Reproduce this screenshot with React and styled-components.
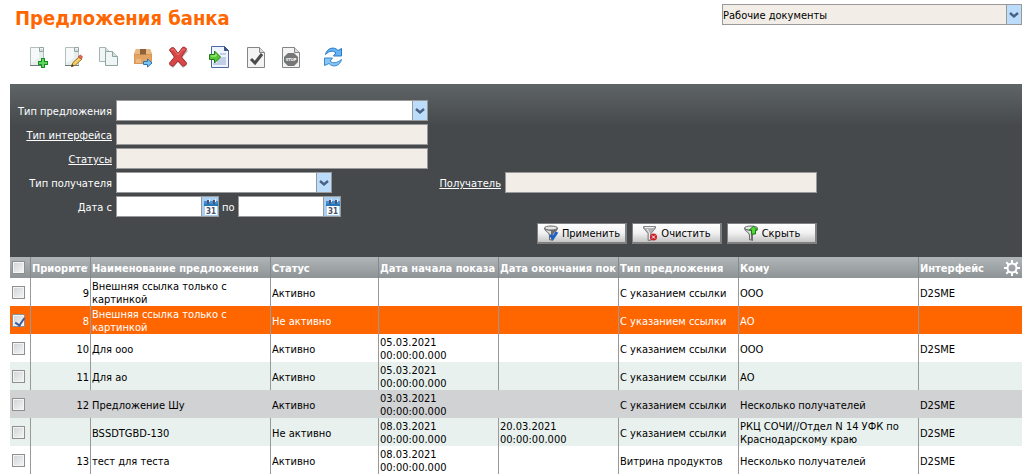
import React, { useState } from "react";
import styled, { createGlobalStyle, css } from "styled-components";

const COLUMNS = [
  { key: "priority", title: "Приоритет", width: 60, align: "right" },
  { key: "name", title: "Наименование предложения", width: 180 },
  { key: "status", title: "Статус", width: 108 },
  { key: "start", title: "Дата начала показа", width: 120 },
  { key: "end", title: "Дата окончания показа", width: 120 },
  { key: "type", title: "Тип предложения", width: 120 },
  { key: "to", title: "Кому", width: 180 },
  { key: "iface", title: "Интерфейс" },
];

const ROWS = [
  { priority: "9", name: "Внешняя ссылка только с картинкой", status: "Активно", type: "С указанием ссылки", to: "ООО", iface: "D2SME" },
  { priority: "8", name: "Внешняя ссылка только с картинкой", status: "Не активно", type: "С указанием ссылки", to: "АО" },
  { priority: "10", name: "Для ооо", status: "Активно", start: "05.03.2021 00:00:00.000", type: "С указанием ссылки", to: "ООО", iface: "D2SME" },
  { priority: "11", name: "Для ао", status: "Активно", start: "05.03.2021 00:00:00.000", type: "С указанием ссылки", to: "АО" },
  { priority: "12", name: "Предложение Шу", status: "Активно", start: "03.03.2021 00:00:00.000", type: "С указанием ссылки", to: "Несколько получателей", iface: "D2SME", hovered: true },
  { priority: "", name: "BSSDTGBD-130", status: "Не активно", start: "08.03.2021 00:00:00.000", end: "20.03.2021 00:00:00.000", type: "С указанием ссылки", to: "РКЦ СОЧИ//Отдел N 14 УФК по Краснодарскому краю", iface: "D2SME" },
  { priority: "13", name: "тест для теста", status: "Активно", start: "08.03.2021 00:00:00.000", type: "Витрина продуктов", to: "Несколько получателей", iface: "D2SME" },
];

const App = () => {
  const [selected, setSelected] = useState([1]);

  const toggle = (index) =>
    setSelected(selected.includes(index) ? selected.filter((i) => i !== index) : [...selected, index]);

  const toggleAll = () => setSelected(selected.length === ROWS.length ? [] : ROWS.map((_, i) => i));

  return (
    <Page>
      <GlobalStyle />
      <Header>
        <Title>Предложения банка</Title>
        <FolderSelect>
          <DropDown label="Папка" muted options={["Рабочие документы"]} />
        </FolderSelect>
      </Header>

      <Toolbar>
        <ToolGroup>
          <Tool aria-label="Создать"><NewIcon /></Tool>
          <Tool aria-label="Редактировать"><EditIcon /></Tool>
          <Tool aria-label="Копировать"><CopyIcon /></Tool>
          <Tool aria-label="Переместить"><MoveIcon /></Tool>
          <Tool aria-label="Удалить"><DeleteIcon /></Tool>
        </ToolGroup>
        <ToolGroup>
          <Tool aria-label="Импорт"><ImportIcon /></Tool>
          <Tool aria-label="Активировать"><ApproveIcon /></Tool>
          <Tool aria-label="Остановить"><StopIcon /></Tool>
        </ToolGroup>
        <ToolGroup>
          <Tool aria-label="Обновить"><RefreshIcon /></Tool>
        </ToolGroup>
      </Toolbar>

      <Filter onSubmit={(e) => e.preventDefault()}>
        <Fields>
          <Label htmlFor="offerType">Тип предложения</Label>
          <DropDown id="offerType" options={[""]} />
          <Spacer />

          <Label htmlFor="iface"><a href="#iface">Тип интерфейса</a></Label>
          <Input id="iface" readOnly />
          <Spacer />

          <Label htmlFor="statuses"><a href="#statuses">Статусы</a></Label>
          <Input id="statuses" readOnly />
          <Spacer />

          <Label htmlFor="recipientType">Тип получателя</Label>
          <Narrow>
            <DropDown id="recipientType" options={[""]} />
          </Narrow>
          <Label htmlFor="recipient"><a href="#recipient">Получатель</a></Label>
          <Input id="recipient" readOnly />

          <Label htmlFor="dateFrom">Дата с</Label>
          <Dates>
            <DateField id="dateFrom" />
            <Label htmlFor="dateTo">по</Label>
            <DateField id="dateTo" />
          </Dates>
        </Fields>
        <Actions>
          <Button type="submit"><ApplyIcon />Применить</Button>
          <Button type="reset"><ClearIcon />Очистить</Button>
          <Button type="button"><HideIcon />Скрыть</Button>
        </Actions>
      </Filter>

      <Table>
        <colgroup>
          <Col $width={21} />
          {COLUMNS.map((col) => (<Col key={col.key} $width={col.width} />))}
        </colgroup>
        <thead>
          <tr>
            <HeadCell $check>
              <Checkbox aria-label="Выбрать все" checked={selected.length === ROWS.length} onChange={toggleAll} />
            </HeadCell>
            {COLUMNS.map((col) => (
              <HeadCell key={col.key}>
                <HeadInner>
                  <HeadText>{col.title}</HeadText>
                  {col.key === "iface" && (
                    <Settings type="button" aria-label="Настройка колонок"><GearIcon /></Settings>
                  )}
                </HeadInner>
              </HeadCell>
            ))}
          </tr>
        </thead>
        <tbody>
          {ROWS.map((row, index) => (
            <Row key={index} $selected={selected.includes(index)} $hovered={row.hovered}>
              <Cell $check>
                <Checkbox
                  aria-label={`Выбрать ${row.name}`}
                  checked={selected.includes(index)}
                  onChange={() => toggle(index)}
                />
              </Cell>
              {COLUMNS.map((col) => (<Cell key={col.key} $align={col.align}>{row[col.key]}</Cell>))}
            </Row>
          ))}
        </tbody>
      </Table>
    </Page>
  );
};

export default App;

const DropDown = ({ id, label, muted, options }) => (
  <SelectBox>
    <Select id={id} aria-label={label} $muted={muted}>
      {options.map((option) => (<option key={option}>{option}</option>))}
    </Select>
    <Arrow>
      <svg width="10" height="8" viewBox="0 0 10 8">
        <path d="M1 2l4 3.5L9 2" fill="none" stroke="#4a6084" strokeWidth="2.4" />
      </svg>
    </Arrow>
  </SelectBox>
);

const DateField = ({ id }) => (
  <DateBox>
    <DateInput id={id} />
    <CalendarButton type="button" aria-label="Календарь">
      <svg width="16" height="19" viewBox="0 0 16 19">
        <path d="M2 4h14v5H2z" fill="#3c93cf" />
        <path d="M2 7h14v2H2z" fill="#2577b5" />
        <path d="M3 9h12v9H3z" fill="#fff" />
        <path d="M6 3v4M12 3v4" stroke="#5a4a7a" strokeWidth="2" />
        <path d="M7.500 2v3M13.500 2v3" stroke="#e2f2ff" />
        <text x="9" y="17" textAnchor="middle" fontSize="8" fontWeight="bold" fill="#4c5068">31</text>
      </svg>
    </CalendarButton>
  </DateBox>
);

/* toolbar icons, all on a 24px box */

const Sheet = ({ x = 2, y = 3, w = 15, h = 19, stroke = "#a5b3b3", fill = "#eff4f4" }) => (
  <>
    <path d={`M${x + 0.5} ${y - 0.5}h${w - 5}l5 5v${h - 5}h-${w}z`} fill={fill} stroke={stroke} />
    <path d={`M${x + w - 4.5} ${y - 0.5}v5h5`} fill="#d5dfdf" stroke={stroke} />
  </>
);

// sheet with a curled corner
const CurledSheet = () => (
  <>
    <path d="M3.500 2.500h12l1 1v17h-13z" fill="#e6eded" stroke="#b3bfbf" />
    <path d="M4 3h8v10l-8 5z" fill="#f6f9f9" />
    <path d="M12.500 2.500h4v4h-4z" fill="#f4f7f7" stroke="#93a3a3" />
    <path d="M13.500 4.500h2v1h-2z" fill="#9fb0b0" />
    <path d="M3 20.500h14" stroke="#6d7b7b" />
  </>
);

const NewIcon = () => (
  <svg width="24" height="24" viewBox="0 0 24 24">
    <CurledSheet />
    <path d="M14 13h4v3h3v4h-3v3h-4v-3h-3v-4h3z" fill="#178f22" />
    <path d="M15 14h2v3h3v2h-3v3h-2v-3h-3v-2h3z" fill="#5ed45a" />
  </svg>
);

const EditIcon = () => (
  <svg width="24" height="24" viewBox="0 0 24 24">
    <CurledSheet />
    <path d="M9.500 21.500l1.500-4 6.500-6 2.500 2.500-6.500 6z" fill="#f5cf60" stroke="#9a722d" />
    <path d="M16.500 11.500l2-1.500 2 2-2 2z" fill="#e36759" stroke="#c85247" />
    <path d="M9 22l1-3 2 2z" fill="#443b2d" />
  </svg>
);

const CopyIcon = () => (
  <svg width="24" height="24" viewBox="0 0 24 24">
    <Sheet x={2} y={3} w={11} h={14} />
    <Sheet x={8} y={7} w={12} h={14} stroke="#8fa3a3" />
  </svg>
);

const MoveIcon = () => (
  <svg width="24" height="24" viewBox="0 0 24 24">
    <path d="M4 4h14l2 5v10H2V9z" fill="#d99655" />
    <path d="M4 4h14l2 5H2z" fill="#e9b982" />
    <path d="M3 10h16v8H3z" fill="#e3a363" />
    <path d="M8 4h6v6l-2-1-1 1-1-1-2 1z" fill="#8e6238" />
    <path d="M4 15h5M4 17h5" stroke="#f2cfa4" />
    <path d="M11.500 16.500h4v-2.500l4.500 4-4.500 4v-2.500h-4z" fill="#7cc4f3" stroke="#2876b8" />
  </svg>
);

const DeleteIcon = () => (
  <svg width="24" height="24" viewBox="0 0 24 24">
    <path d="M4 6l4-2 4 5 5-6 4 3-6 7 5 7-4 3-5-6-5 6-4-3 5-7z" fill="#72706f" opacity=".5" />
    <path d="M2.500 5c1-2 3-3 4.500-2l4 5.500 4.500-6c1.500-1 3 0 4 1.500l-5 8 5 6c0 2-2 3-4 3l-4.500-5-4.500 5c-2 0-4-1-4-3l5-6z" fill="#d94646" stroke="#a52c31" />
    <path d="M4 5l2.500-1 4.500 6 5-6 2 1" fill="none" stroke="#ef7b74" />
  </svg>
);

const ImportIcon = () => (
  <svg width="24" height="24" viewBox="0 0 24 24">
    <path d="M2.500 1.500h13l4 4v17h-17z" fill="#eef3fc" stroke="#4e67a7" />
    <path d="M15.500 1.500v4h4z" fill="#3d5489" stroke="#3d5489" />
    <path d="M11 8h6v2h-6zM8 12h9v8H4v-2h4z" fill="#c0cee7" />
    <path d="M.5 9.500h5V6l6 6-6 6v-3.500h-5z" fill="#54c932" stroke="#247b19" />
    <path d="M2 11h5V9" fill="none" stroke="#b5f295" />
  </svg>
);

const ApproveIcon = () => (
  <svg width="24" height="24" viewBox="0 0 24 24">
    <Sheet x={3} y={3} w={17} h={20} stroke="#858585" fill="#f3f3f3" />
    <path d="M7 14l4 4 7-9" fill="none" stroke="#4b4b4b" strokeWidth="3" />
  </svg>
);

const StopIcon = () => (
  <svg width="24" height="24" viewBox="0 0 24 24">
    <Sheet x={3} y={3} w={17} h={20} stroke="#858585" fill="#f3f3f3" />
    <path d="M9 8h6l4 4v5l-4 4H9l-4-4v-5z" fill="#777" />
    <text x="12" y="16" textAnchor="middle" fontSize="4" fontWeight="bold" fill="#fff">STOP</text>
  </svg>
);

const RefreshIcon = () => (
  <svg width="24" height="24" viewBox="0 0 24 24">
    <path d="M4.500 9.500C6 3 13 1 17 5.500l3.500-2v7.500h-8l2.500-3C12 5 8 6 4.500 9.500z" fill="#66b4f3" stroke="#2b78c6" />
    <path d="M20.500 14.500C19 21 12 23 8 18.500l-4.500 2V13h8l-2.500 3c3 3 7 2 11.500-1.500z" fill="#85c6f7" stroke="#3986d0" />
  </svg>
);

const GearIcon = () => (
  <svg width="16" height="16" viewBox="0 0 16 16">
    <circle cx="8" cy="8" r="4.500" fill="none" stroke="#fff" strokeWidth="2" />
    <path
      d="M8 0v3M8 13v3M0 8h3M13 8h3M2.300 2.300l2.200 2.200M11.500 11.500l2.200 2.200M13.700 2.300l-2.200 2.200M4.500 11.500l-2.200 2.200"
      stroke="#fff"
      strokeWidth="2"
    />
  </svg>
);

const Funnel = () => (
  <>
    <path d="M1 3c0 3 4 4 5 7v5l4 1v-6c1-3 5-4 5-7z" fill="#6f6f6f" />
    <path d="M3 5c1 2 4 3 4 5v4l1 .5V6z" fill="#dcdcdc" />
    <ellipse cx="8" cy="3" rx="6.500" ry="2" fill="#e4e4e4" stroke="#6a6a6a" />
  </>
);

const ApplyIcon = () => (
  <svg width="16" height="16" viewBox="0 0 16 16">
    <Funnel />
    <path d="M7 10l3 3 4-6" fill="none" stroke="#1c62c4" strokeWidth="3" />
  </svg>
);

const ClearIcon = () => (
  <svg width="16" height="16" viewBox="0 0 16 16">
    <path d="M1.500 1.500h12V3L9 8.500v7H6v-7L1.500 3z" fill="#b3b3b6" stroke="#858589" />
    <path d="M3 2.500h9M5 4l2.500 4v6" stroke="#ececec" fill="none" />
    <circle cx="11.500" cy="12" r="3.500" fill="#c9202b" />
    <path d="M10 10.500l3 3M13 10.500l-3 3" stroke="#fff" />
  </svg>
);

const HideIcon = () => (
  <svg width="16" height="16" viewBox="0 0 16 16">
    <Funnel />
    <path d="M10.500 1l4 4h-2v4h-4V5h-2z" fill="#55d934" stroke="#137c13" />
  </svg>
);

const GlobalStyle = createGlobalStyle`
  body {
    margin: 0;
    background: #fff;
    color: #000;
  }
  body, input, select, button {
    font-family: "DejaVu Sans Condensed", "DejaVu Sans", sans-serif;
    font-size: 11px;
    line-height: 13px;
  }
  * {
    box-sizing: border-box;
  }
`;

const Page = styled.div`
  padding-left: 10px;
`;

const Header = styled.header`
  display: flex;
  justify-content: space-between;
  align-items: flex-start;
  padding: 4px 0 0 5px;
`;

const Title = styled.h1`
  margin: 0;
  font-size: 20px;
  line-height: 28px;
  font-weight: bold;
  color: #f60;
`;

const FolderSelect = styled.div`
  width: 300px;
`;

const Toolbar = styled.div`
  display: flex;
  gap: 18px;
  padding: 13px 17px 15px;
`;

const ToolGroup = styled.div`
  display: flex;
  gap: 11px;
`;

const Tool = styled.button`
  display: flex;
  padding: 0;
  border: 0;
  background: none;
  cursor: pointer;
`;

const Filter = styled.form`
  padding: 16px 0 13px;
  color: #fff;
  background: #45494c linear-gradient(#5f6467, #45494c) no-repeat top / 100% 42px;
`;

const Fields = styled.div`
  display: grid;
  grid-template-columns: 102px 312px 69px 312px;
  column-gap: 4px;
  row-gap: 3px;
  align-items: center;
`;

const Label = styled.label`
  padding-top: 2px;
  text-align: right;
  white-space: nowrap;

  a {
    color: #fff;
  }
`;

const Spacer = styled.div`
  grid-column: span 2;
`;

const field = css`
  width: 100%;
  height: 21px;
  margin: 0;
  padding: 0;
  border: 1px solid #999;
  border-radius: 0;
  outline: none;
  color: #000;
`;

const Input = styled.input`
  ${field}
  background: ${({ readOnly }) => (readOnly ? "#f2eee7" : "#fff")};
`;

const SelectBox = styled.div`
  position: relative;
`;

const Select = styled.select`
  ${field}
  display: block;
  padding-top: 1px;
  appearance: none;
  background: ${({ $muted }) => ($muted ? "#f2eee7" : "#fff")};
`;

const Arrow = styled.span`
  position: absolute;
  top: 1px;
  right: 1px;
  bottom: 1px;
  width: 15px;
  display: flex;
  align-items: center;
  justify-content: center;
  border-left: 1px solid #999;
  background: #bbdcfb;
  pointer-events: none;
`;

const Narrow = styled.div`
  width: 216px;
`;

const Dates = styled.div`
  display: flex;
  align-items: center;
  gap: 3px;
`;

const DateBox = styled.div`
  display: flex;
  width: 103px;
  height: 21px;
  border: 1px solid #999;
`;

const DateInput = styled.input`
  flex: 1;
  min-width: 0;
  padding: 0;
  border: 0;
  outline: none;
  background: #fff;
`;

const CalendarButton = styled.button`
  display: flex;
  padding: 0;
  border: 0;
  border-left: 1px solid #999;
  background: #a9cff3;
`;

const Actions = styled.div`
  display: flex;
  justify-content: flex-end;
  gap: 5px;
  width: 807px;
  max-width: 100%;
  margin-top: 6px;
`;

const Button = styled.button`
  display: flex;
  align-items: center;
  justify-content: center;
  gap: 3px;
  width: 90px;
  height: 21px;
  padding: 0;
  border: 1px solid #808080;
  border-width: 1px 2px 2px 1px;
  background: linear-gradient(#fff, #f1f1f1 50%, #c6c6c6);
  color: #000;
  cursor: pointer;
`;

const Table = styled.table`
  width: 100%;
  table-layout: fixed;
  border-collapse: separate;
  border-spacing: 0;
`;

const Col = styled.col`
  width: ${({ $width }) => ($width ? `${$width}px` : "auto")};
`;

const HeadCell = styled.th`
  height: 21px;
  padding: ${({ $check }) => ($check ? "0 2px" : "0 2px 0 1px")};
  border-right: 1px solid #85898c;
  background: linear-gradient(#b0b5b8, #8e9396);
  color: #fff;
  text-align: left;

  &:last-child {
    border-right: 0;
  }
`;

const HeadInner = styled.div`
  display: flex;
  align-items: center;
  justify-content: space-between;
`;

const HeadText = styled.span`
  padding-top: 2px;
  overflow: hidden;
  white-space: nowrap;
`;

const Settings = styled.button`
  display: flex;
  padding: 0;
  border: 0;
  background: none;
`;

const Cell = styled.td`
  height: 28px;
  padding: ${({ $check }) => ($check ? "0 2px" : "2px 1px 0 1px")};
  border-right: 1px solid #999;
  text-align: ${({ $align }) => $align || "left"};
  vertical-align: middle;

  &:last-child {
    border-right: 0;
  }
`;

const Row = styled.tr`
  &:nth-child(even) {
    background: #e8f1ee;
  }

  ${({ $hovered }) => $hovered && css`
    &&& {
      background: #d1d2d4;
    }
    ${Cell} {
      border-color: transparent;
    }
  `}

  ${({ $selected }) => $selected && css`
    &&& {
      background: #f60;
      color: #fff;
    }
  `}
`;

const Checkbox = styled.input.attrs({ type: "checkbox" })`
  appearance: none;
  position: relative;
  display: block;
  width: 13px;
  height: 13px;
  margin: 0;
  border: 1px solid #8f8f8f;
  background: linear-gradient(135deg, #cfd2d6, #f6f6f6);
  box-shadow: inset 0 0 0 1px #f4f4f4;

  &:checked::after {
    content: "";
    position: absolute;
    top: 1px;
    left: 4px;
    width: 4px;
    height: 8px;
    border: solid #3b5aa0;
    border-width: 0 2px 2px 0;
    transform: rotate(35deg);
  }
`;
